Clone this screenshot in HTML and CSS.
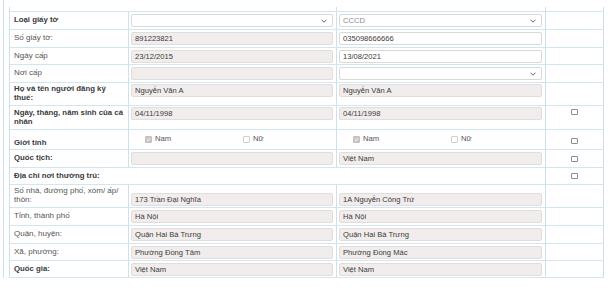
FILE: index.html
```html
<!DOCTYPE html>
<html lang="vi">
<head>
<meta charset="utf-8">
<title>Thông tin người đăng ký thuế</title>
<link rel="stylesheet" href="styles.css">
</head>
<body>
<div class="wrap">
  <div class="tbl">
    <div class="row stub">
      <div class="c c1"></div><div class="c c2"></div><div class="c c3"></div><div class="c c4"></div>
    </div>

    <div class="row h18">
      <div class="c lbl b">Loại giấy tờ</div>
      <div class="c"><div class="field white sel"><span></span><svg class="chev" viewBox="0 0 6 4"><polyline points="0.5,0.7 3,3.2 5.5,0.7"/></svg></div></div>
      <div class="c"><div class="field white sel"><span class="muted">CCCD</span><svg class="chev" viewBox="0 0 6 4"><polyline points="0.5,0.7 3,3.2 5.5,0.7"/></svg></div></div>
      <div class="c"></div>
    </div>

    <div class="row h18">
      <div class="c lbl">Số giấy tờ:</div>
      <div class="c"><div class="field">891223821</div></div>
      <div class="c"><div class="field white">035098666666</div></div>
      <div class="c"></div>
    </div>

    <div class="row h17">
      <div class="c lbl">Ngày cấp</div>
      <div class="c"><div class="field">23/12/2015</div></div>
      <div class="c"><div class="field white">13/08/2021</div></div>
      <div class="c"></div>
    </div>

    <div class="row h18">
      <div class="c lbl">Nơi cấp</div>
      <div class="c"><div class="field"></div></div>
      <div class="c"><div class="field white sel"><span></span><svg class="chev" viewBox="0 0 6 4"><polyline points="0.5,0.7 3,3.2 5.5,0.7"/></svg></div></div>
      <div class="c"></div>
    </div>

    <div class="row h23">
      <div class="c lbl b"><span>Họ và tên người đăng ký<br>thuế:</span></div>
      <div class="c top"><div class="field">Nguyễn Văn A</div></div>
      <div class="c top"><div class="field">Nguyễn Văn A</div></div>
      <div class="c"></div>
    </div>

    <div class="row h24">
      <div class="c lbl b"><span>Ngày, tháng, năm sinh của cá<br>nhân</span></div>
      <div class="c top"><div class="field">04/11/1998</div></div>
      <div class="c top"><div class="field">04/11/1998</div></div>
      <div class="c chk top"><span class="box"></span></div>
    </div>

    <div class="row h20">
      <div class="c lbl b bottom">Giới tính</div>
      <div class="c opts">
        <span class="opt"><span class="box sm on"><svg viewBox="0 0 8 8"><polyline points="1.6,4.2 3.3,5.8 6.4,2.2"/></svg></span>Nam</span>
        <span class="opt"><span class="box sm"></span>Nữ</span>
      </div>
      <div class="c opts">
        <span class="opt"><span class="box sm on"><svg viewBox="0 0 8 8"><polyline points="1.6,4.2 3.3,5.8 6.4,2.2"/></svg></span>Nam</span>
        <span class="opt"><span class="box sm"></span>Nữ</span>
      </div>
      <div class="c chk lower"><span class="box"></span></div>
    </div>

    <div class="row h18">
      <div class="c lbl b">Quốc tịch:</div>
      <div class="c"><div class="field"></div></div>
      <div class="c"><div class="field">Việt Nam</div></div>
      <div class="c chk"><span class="box"></span></div>
    </div>

    <div class="row h17 span">
      <div class="c lbl b">Địa chỉ nơi thường trú:</div>
      <div class="c chk"><span class="box"></span></div>
    </div>

    <div class="row h23">
      <div class="c lbl"><span>Số nhà, đường phố, xóm/ ấp/<br>thôn:</span></div>
      <div class="c bottom"><div class="field">173 Trần Đại Nghĩa</div></div>
      <div class="c bottom"><div class="field">1A Nguyễn Công Trứ</div></div>
      <div class="c"></div>
    </div>

    <div class="row h18">
      <div class="c lbl">Tỉnh, thành phố</div>
      <div class="c"><div class="field">Hà Nội</div></div>
      <div class="c"><div class="field">Hà Nội</div></div>
      <div class="c"></div>
    </div>

    <div class="row h18">
      <div class="c lbl">Quận, huyện:</div>
      <div class="c"><div class="field">Quận Hai Bà Trưng</div></div>
      <div class="c"><div class="field">Quận Hai Bà Trưng</div></div>
      <div class="c"></div>
    </div>

    <div class="row h17">
      <div class="c lbl">Xã, phường:</div>
      <div class="c"><div class="field">Phường Đồng Tâm</div></div>
      <div class="c"><div class="field">Phường Đồng Mác</div></div>
      <div class="c"></div>
    </div>

    <div class="row h17">
      <div class="c lbl b">Quốc gia:</div>
      <div class="c"><div class="field">Việt Nam</div></div>
      <div class="c"><div class="field">Việt Nam</div></div>
      <div class="c"></div>
    </div>
  </div>
</div>
</body>
</html>
```

FILE: styles.css
```css
html, body {
  margin: 0;
  padding: 0;
  background: #ffffff;
}

body {
  font-family: "Liberation Sans", Arial, sans-serif;
  color: #333333;
}

.wrap {
  margin-left: 3px;
  width: 600px;
  border-left: 1px solid #cfe2ec;
  padding: 7px 0 0 5px;
  box-sizing: border-box;
}

.tbl {
  width: 595px;
  border-left: 1px solid #cde1eb;
  box-sizing: border-box;
}

.row {
  display: grid;
  grid-template-columns: 119px 208px 209px 58px;
  border-bottom: 1px solid #d3e5ee;
  box-sizing: border-box;
}

.row.span {
  grid-template-columns: 536px 58px;
}

.stub { height: 5px; }
.h17 { height: 17px; }
.h18 { height: 18px; }
.h20 { height: 20px; }
.h23 { height: 23px; }
.h24 { height: 24px; }

.c {
  display: flex;
  align-items: center;
  min-width: 0;
  padding: 0 3px 0 2px;
  border-right: 1px solid #cde1eb;
  box-sizing: border-box;
}

.stub .c1 { border-right: none; }

.c.top {
  align-items: flex-start;
  padding-top: 1px;
}

.c.bottom {
  align-items: flex-end;
  padding-bottom: 1px;
}

.lbl {
  padding: 0 2px 0 4px;
  font-size: 8px;
  line-height: 8.7px;
  color: #555555;
  white-space: nowrap;
}

.lbl.b {
  font-weight: bold;
  font-size: 7.8px;
  color: #3a3a3a;
}

.lbl.bottom {
  align-items: flex-end;
  padding-bottom: 1px;
}

.field {
  display: flex;
  align-items: center;
  width: 100%;
  height: 13px;
  box-sizing: border-box;
  padding: 0 5px 0 3px;
  border: 1px solid #e2dddd;
  border-radius: 2px;
  background: #f1eded;
  font-size: 7.6px;
  color: #3a3a3a;
  white-space: nowrap;
}

.field.white {
  background: #ffffff;
  border-color: #d9d9d9;
}

.field.sel {
  justify-content: space-between;
}

.muted {
  color: #8a8a8a;
}

.chev {
  width: 6px;
  height: 4px;
  fill: none;
  stroke: #666666;
  stroke-width: 1;
}

.chk {
  justify-content: center;
}

.chk.top {
  padding-top: 3px;
}

.chk.lower {
  align-items: flex-end;
  padding-bottom: 5px;
}

.box {
  display: inline-flex;
  width: 7px;
  height: 6px;
  box-sizing: border-box;
  border: 1px solid #8c8c8c;
  border-radius: 1px;
  background: #ffffff;
}

.opts {
  align-items: flex-start;
  padding-top: 4px;
}

.opt {
  display: inline-flex;
  align-items: center;
  width: 98px;
  padding-left: 14px;
  box-sizing: border-box;
  font-size: 7.7px;
  line-height: 10px;
  color: #555555;
}

.box.sm {
  width: 7px;
  height: 7px;
  margin-right: 3px;
  border-color: #cfcfcf;
}

.box.sm.on {
  background: #c9c9c9;
  border-color: #c0c0c0;
}

.box svg {
  width: 100%;
  height: 100%;
  fill: none;
  stroke: #ffffff;
  stroke-width: 1.2;
}
```
